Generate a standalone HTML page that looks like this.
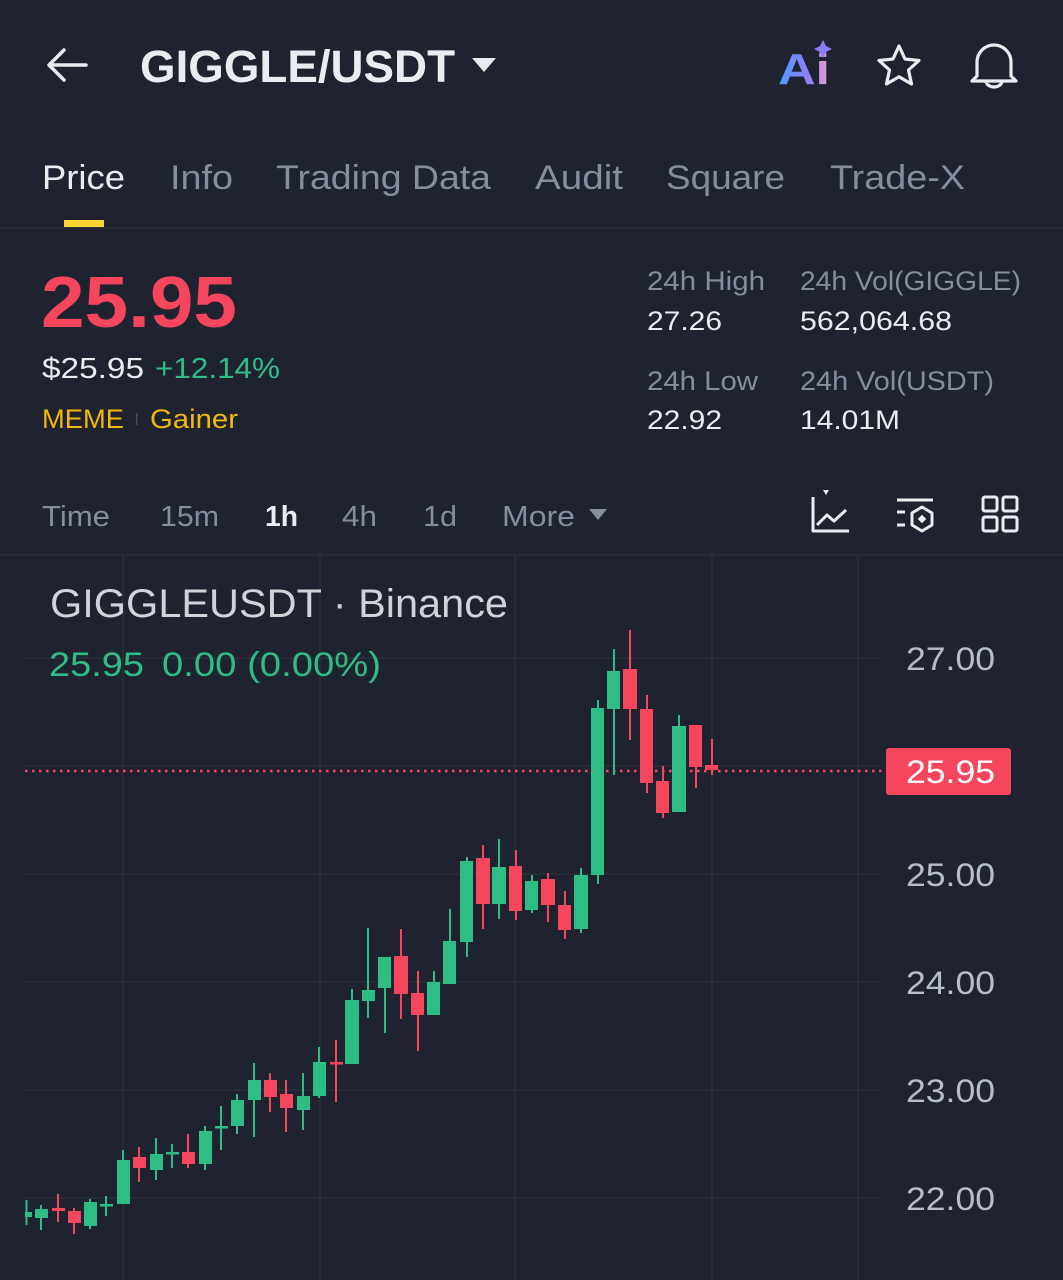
<!DOCTYPE html>
<html><head><meta charset="utf-8"><style>
html,body{margin:0;padding:0;background:#1f2330;}
svg{display:block}
text{font-family:"Liberation Sans",sans-serif}
</style></head><body>
<svg width="1063" height="1280" viewBox="0 0 1063 1280" xmlns="http://www.w3.org/2000/svg">
<rect width="1063" height="1280" fill="#1f2330"/>
<defs><linearGradient id="ai" x1="0" y1="0" x2="1" y2="0"><stop offset="0" stop-color="#4d9dff"/><stop offset="0.55" stop-color="#8a7dff"/><stop offset="1" stop-color="#f0a0c8"/></linearGradient></defs>
<path d="M86 65H50M64 50L49 65L64 80" stroke="#eaecef" stroke-width="3.5" fill="none" stroke-linecap="round" stroke-linejoin="round"/>
<text x="140" y="82" font-size="45" font-weight="bold" fill="#eaecef" textLength="315" lengthAdjust="spacingAndGlyphs">GIGGLE/USDT</text>
<path d="M472 58h24l-12 14z" fill="#eaecef"/>
<text x="778" y="84" font-size="44" font-weight="bold" fill="url(#ai)" textLength="52" lengthAdjust="spacingAndGlyphs">Ai</text>
<path d="M823 40l3 6 6 3-6 3-3 6-3-6-6-3 6-3z" fill="#8a7dff"/>
<path d="M899 46l6 13 14 1.5-10.5 9.5 3 14-12.5-7.2-12.5 7.2 3-14-10.5-9.5 14-1.5z" fill="none" stroke="#eaecef" stroke-width="3.2" stroke-linejoin="round"/>
<path d="M977 76v-14a17 17 0 0 1 34 0v14l5 5h-44z" fill="none" stroke="#eaecef" stroke-width="3.2" stroke-linejoin="round"/>
<path d="M986 81a8 6 0 0 0 16 0" fill="none" stroke="#eaecef" stroke-width="3.2"/>
<g font-size="34" fill="#848e9c">
<text x="42" y="189" fill="#eaecef" textLength="83" lengthAdjust="spacingAndGlyphs">Price</text>
<text x="170" y="189" textLength="63" lengthAdjust="spacingAndGlyphs">Info</text>
<text x="276" y="189" textLength="215" lengthAdjust="spacingAndGlyphs">Trading Data</text>
<text x="535" y="189" textLength="88" lengthAdjust="spacingAndGlyphs">Audit</text>
<text x="666" y="189" textLength="119" lengthAdjust="spacingAndGlyphs">Square</text>
<text x="830" y="189" textLength="135" lengthAdjust="spacingAndGlyphs">Trade-X</text>
</g>
<rect x="64" y="220" width="40" height="7" fill="#fcd535"/>
<rect x="0" y="227" width="1063" height="1.5" fill="#2b3139"/>
<text x="41" y="327" font-size="72" font-weight="bold" fill="#f6465d" textLength="196" lengthAdjust="spacingAndGlyphs">25.95</text>
<text x="42" y="378" font-size="29" fill="#eaecef" textLength="102" lengthAdjust="spacingAndGlyphs">$25.95</text>
<text x="155" y="378" font-size="29" fill="#2ebd85" textLength="125" lengthAdjust="spacingAndGlyphs">+12.14%</text>
<text x="42" y="428" font-size="27" fill="#f0b90b" textLength="82" lengthAdjust="spacingAndGlyphs">MEME</text>
<rect x="136" y="413" width="1.5" height="12" fill="#474d57"/>
<text x="150" y="428" font-size="27" fill="#f0b90b" textLength="88" lengthAdjust="spacingAndGlyphs">Gainer</text>
<g font-size="27">
<text x="647" y="290" fill="#848e9c" textLength="118" lengthAdjust="spacingAndGlyphs">24h High</text>
<text x="647" y="330" fill="#eaecef" textLength="75" lengthAdjust="spacingAndGlyphs">27.26</text>
<text x="800" y="290" fill="#848e9c" textLength="221" lengthAdjust="spacingAndGlyphs">24h Vol(GIGGLE)</text>
<text x="800" y="330" fill="#eaecef" textLength="152" lengthAdjust="spacingAndGlyphs">562,064.68</text>
<text x="647" y="390" fill="#848e9c" textLength="111" lengthAdjust="spacingAndGlyphs">24h Low</text>
<text x="647" y="429" fill="#eaecef" textLength="75" lengthAdjust="spacingAndGlyphs">22.92</text>
<text x="800" y="390" fill="#848e9c" textLength="194" lengthAdjust="spacingAndGlyphs">24h Vol(USDT)</text>
<text x="800" y="429" fill="#eaecef" textLength="100" lengthAdjust="spacingAndGlyphs">14.01M</text>
</g>
<g font-size="29" fill="#848e9c">
<text x="42" y="526" textLength="68" lengthAdjust="spacingAndGlyphs">Time</text>
<text x="160" y="526" textLength="59" lengthAdjust="spacingAndGlyphs">15m</text>
<text x="265" y="526" fill="#eaecef" font-weight="bold" textLength="33" lengthAdjust="spacingAndGlyphs">1h</text>
<text x="342" y="526" textLength="35" lengthAdjust="spacingAndGlyphs">4h</text>
<text x="423" y="526" textLength="34" lengthAdjust="spacingAndGlyphs">1d</text>
<text x="502" y="526" textLength="73" lengthAdjust="spacingAndGlyphs">More</text>
</g>
<path d="M589 509h18l-9 11z" fill="#848e9c"/>
<g stroke="#eaecef" stroke-width="3" fill="none" stroke-linejoin="round">
<path d="M813 497v34h36"/>
<path d="M817 525l10-10 7 6 12-11"/>
<path d="M897 500h36M897 512h8M897 525h8"/>
<path d="M922 507l10 6v12l-10 6-10-6v-12z"/>
<rect x="983" y="497" width="14" height="14" rx="2"/><rect x="1003" y="497" width="14" height="14" rx="2"/>
<rect x="983" y="517" width="14" height="14" rx="2"/><rect x="1003" y="517" width="14" height="14" rx="2"/>
</g>
<path d="M823 490l6 0-3 5z" fill="#eaecef"/>
<rect x="919" y="516" width="6" height="6" transform="rotate(45 922 519)" fill="#eaecef"/>
<rect x="0" y="554" width="1063" height="1.5" fill="#2b3139"/>
<g stroke="#2b3039" stroke-width="1.5">
<path d="M123 556V1280M320 556V1280M515 556V1280M712 556V1280M858 556V1280"/>
<path d="M25 658H880M25 766H880M25 874H880M25 982H880M25 1090H880M25 1198H880"/>
</g>
<text x="50" y="617" font-size="40" fill="#d0d3d8" textLength="458" lengthAdjust="spacingAndGlyphs">GIGGLEUSDT · Binance</text>
<text x="49" y="676" font-size="34" fill="#2ebd85" textLength="95" lengthAdjust="spacingAndGlyphs">25.95</text>
<text x="162" y="676" font-size="34" fill="#2ebd85" textLength="219" lengthAdjust="spacingAndGlyphs">0.00 (0.00%)</text>
<line x1="25" y1="771" x2="882" y2="771" stroke="#f6465d" stroke-width="2.5" stroke-dasharray="2.5 4.5"/>
<g fill="#2ebd85">
<rect x="25.5" y="1200" width="2" height="25"/><rect x="25" y="1212" width="7" height="5"/>
<rect x="40" y="1205" width="2" height="25"/><rect x="35" y="1209" width="13" height="9"/>
<rect x="89" y="1199" width="2" height="30"/><rect x="84" y="1202" width="13" height="24"/>
<rect x="105" y="1196" width="2" height="20"/><rect x="100" y="1204" width="13" height="2.5"/>
<rect x="122" y="1150" width="2" height="54"/><rect x="117" y="1160" width="13" height="44"/>
<rect x="155" y="1138" width="2" height="42"/><rect x="150" y="1154" width="13" height="16"/>
<rect x="171" y="1144" width="2" height="24"/><rect x="166" y="1152" width="13" height="2.5"/>
<rect x="204" y="1126" width="2" height="44"/><rect x="199" y="1131" width="13" height="33"/>
<rect x="220" y="1106" width="2" height="44"/><rect x="215" y="1126" width="13" height="2.5"/>
<rect x="236" y="1094" width="2" height="40"/><rect x="231" y="1100" width="13" height="26"/>
<rect x="253" y="1063" width="2" height="74"/><rect x="248" y="1080" width="13" height="20"/>
<rect x="302" y="1073" width="2" height="57"/><rect x="297" y="1096" width="13" height="14"/>
<rect x="318" y="1047" width="2" height="51"/><rect x="313" y="1062" width="13" height="34"/>
<rect x="351" y="989" width="2" height="75"/><rect x="345" y="1000" width="14" height="64"/>
<rect x="367" y="928" width="2" height="90"/><rect x="362" y="990" width="13" height="11"/>
<rect x="384" y="957" width="2" height="76"/><rect x="378" y="957" width="13" height="31"/>
<rect x="433" y="971" width="2" height="44"/><rect x="427" y="982" width="13" height="33"/>
<rect x="449" y="909" width="2" height="75"/><rect x="443" y="941" width="13" height="43"/>
<rect x="466" y="857" width="2" height="100"/><rect x="460" y="861" width="13" height="81"/>
<rect x="498" y="839" width="2" height="80"/><rect x="492" y="867" width="14" height="37"/>
<rect x="531" y="875" width="2" height="38"/><rect x="525" y="881" width="13" height="29"/>
<rect x="580" y="868" width="2" height="65"/><rect x="574" y="875" width="14" height="54"/>
<rect x="597" y="700" width="2" height="184"/><rect x="591" y="708" width="13" height="167"/>
<rect x="613" y="649" width="2" height="126"/><rect x="607" y="671" width="13" height="38"/>
<rect x="678" y="715" width="2" height="97"/><rect x="672" y="726" width="14" height="86"/>
</g>
<g fill="#f6465d">
<rect x="57" y="1194" width="2" height="28"/><rect x="52" y="1208" width="13" height="3"/>
<rect x="73" y="1208" width="2" height="26"/><rect x="68" y="1211" width="13" height="12"/>
<rect x="138" y="1147" width="2" height="35"/><rect x="133" y="1157" width="13" height="11"/>
<rect x="187" y="1134" width="2" height="34"/><rect x="182" y="1152" width="13" height="12"/>
<rect x="269" y="1073" width="2" height="39"/><rect x="264" y="1080" width="13" height="17"/>
<rect x="285" y="1080" width="2" height="52"/><rect x="280" y="1094" width="13" height="14"/>
<rect x="335" y="1040" width="2" height="62"/><rect x="330" y="1062" width="13" height="2.5"/>
<rect x="400" y="929" width="2" height="90"/><rect x="394" y="956" width="14" height="38"/>
<rect x="417" y="971" width="2" height="80"/><rect x="411" y="993" width="13" height="22"/>
<rect x="482" y="845" width="2" height="84"/><rect x="476" y="858" width="14" height="46"/>
<rect x="515" y="850" width="2" height="70"/><rect x="509" y="866" width="13" height="45"/>
<rect x="547" y="873" width="2" height="49"/><rect x="541" y="879" width="14" height="26"/>
<rect x="564" y="891" width="2" height="48"/><rect x="558" y="905" width="13" height="25"/>
<rect x="629" y="630" width="2" height="110"/><rect x="623" y="669" width="14" height="40"/>
<rect x="646" y="695" width="2" height="98"/><rect x="640" y="709" width="13" height="74"/>
<rect x="662" y="766" width="2" height="52"/><rect x="656" y="781" width="13" height="32"/>
<rect x="695" y="725" width="2" height="63"/><rect x="689" y="725" width="13" height="42"/>
<rect x="711" y="739" width="2" height="36"/><rect x="705" y="765" width="13" height="5"/>
</g>
<g font-size="32" fill="#b7bdc6">
<text x="906" y="670" textLength="89" lengthAdjust="spacingAndGlyphs">27.00</text>
<text x="906" y="886" textLength="89" lengthAdjust="spacingAndGlyphs">25.00</text>
<text x="906" y="994" textLength="89" lengthAdjust="spacingAndGlyphs">24.00</text>
<text x="906" y="1102" textLength="89" lengthAdjust="spacingAndGlyphs">23.00</text>
<text x="906" y="1210" textLength="89" lengthAdjust="spacingAndGlyphs">22.00</text>
</g>
<rect x="886" y="748" width="125" height="47" rx="3" fill="#f6465d"/>
<text x="906" y="783" font-size="32" fill="#ffffff" textLength="89" lengthAdjust="spacingAndGlyphs">25.95</text>
</svg>
</body></html>
